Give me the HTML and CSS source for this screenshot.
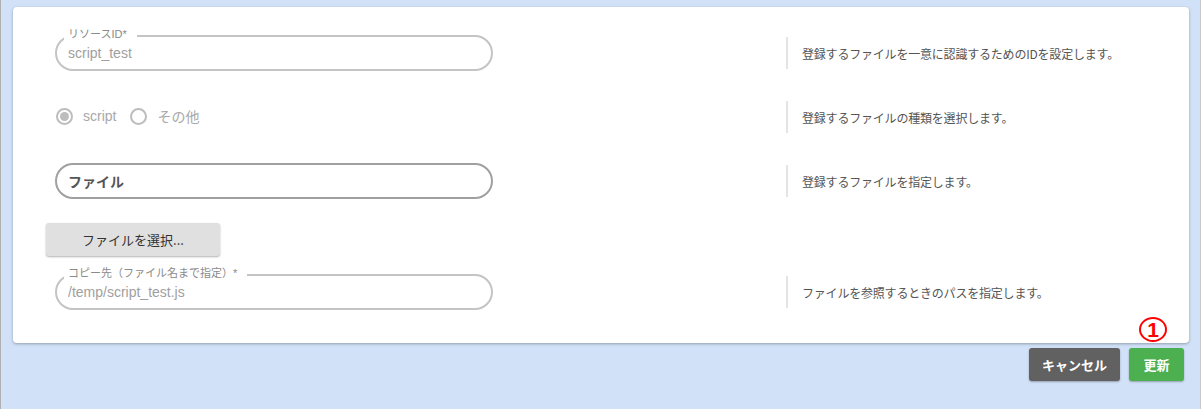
FILE: index.html
```html
<!DOCTYPE html>
<html lang="ja">
<head>
  <meta charset="UTF-8">
  <meta name="viewport" content="width=device-width, initial-scale=1.0">
  <title>リソース編集</title>
  <link rel="stylesheet" href="styles.css">
</head>
<body>

<div class="page">
  <div class="card">

    <!-- リソースID -->
    <div class="row">
      <div class="field">
        <span class="field-label">リソースID*</span>
        <input class="field-input" type="text" value="script_test" readonly>
      </div>
      <div class="desc">登録するファイルを一意に認識するためのIDを設定します。</div>
    </div>

    <!-- 種類 -->
    <div class="row row-radio">
      <div class="radio-group">
        <span class="radio checked"></span>
        <span class="radio-text">script</span>
        <span class="radio"></span>
        <span class="radio-text">その他</span>
      </div>
      <div class="desc">登録するファイルの種類を選択します。</div>
    </div>

    <!-- ファイル -->
    <div class="row row-file">
      <div class="field field-dark">
        <span class="file-name">ファイル</span>
      </div>
      <div class="desc">登録するファイルを指定します。</div>
    </div>

    <div class="row row-button">
      <button class="select-button">ファイルを選択...</button>
    </div>

    <!-- コピー先 -->
    <div class="row row-copy">
      <div class="field">
        <span class="field-label">コピー先（ファイル名まで指定）*</span>
        <input class="field-input" type="text" value="/temp/script_test.js" readonly>
      </div>
      <div class="desc">ファイルを参照するときのパスを指定します。</div>
    </div>

  </div>

  <div class="actions">
    <button class="btn btn-cancel">キャンセル</button>
    <button class="btn btn-update">更新</button>
    <span class="marker">1</span>
  </div>
</div>

</body>
</html>
```

FILE: styles.css
```css
html, body {
  margin: 0;
  padding: 0;
  background-color: #fff;
}
body {
  font-family: "Liberation Sans", "Noto Sans CJK JP", sans-serif;
}
.page {
  width: 1201px;
  height: 409px;
  box-sizing: border-box;
  background-color: #d1e1f7;
  border-left: 1px solid #b0b0b0;
  border-right: 1px solid #c8c8c8;
  padding: 7px 13px 0 12px;
}
/* カード */
.card {
  width: 1176px;
  box-sizing: border-box;
  background-color: #fff;
  border-radius: 4px;
  box-shadow: 0 1px 3px rgba(0, 0, 0, 0.3);
  padding: 28px 0 33px 33px;
}
.row {
  display: grid;
  grid-template-columns: 740px 1fr;
  align-items: center;
}
.row-radio { margin-top: 30px; height: 32px; }
.row-file { margin-top: 30px; }
.row-button { margin-top: 24px; }
.row-copy { margin-top: 18px; }

/* 入力欄（アウトライン） */
.field {
  position: relative;
  margin-left: 9px;
  width: 438px;
  height: 36px;
  box-sizing: border-box;
  border: 2px solid #c4c4c4;
  border-radius: 18px;
  display: flex;
  align-items: center;
  padding-left: 11px;
}
.field-dark {
  border-color: #a0a0a0;
}
.field-label {
  position: absolute;
  top: -9px;
  left: 7px;
  font-size: 11px;
  line-height: 13px;
  color: #8a8a8a;
  background-color: #fff;
  padding: 0 10px 0 4px;
}
.field-input {
  flex: 1;
  border: none;
  outline: none;
  padding: 0;
  background: transparent;
  font-family: "Liberation Sans", "Noto Sans CJK JP", sans-serif;
  font-size: 14px;
  color: #a0a0a0;
}
.file-name {
  font-family: "Noto Sans CJK JP", sans-serif;
  font-size: 14px;
  font-weight: bold;
  color: #555;
}

/* ラジオボタン */
.radio-group {
  display: flex;
  align-items: center;
  margin: 0 0 2px 10px;
}
.radio {
  width: 17px;
  height: 17px;
  box-sizing: border-box;
  border: 2px solid #bdbdbd;
  border-radius: 50%;
  display: flex;
  align-items: center;
  justify-content: center;
}
.radio.checked::after {
  content: "";
  width: 9px;
  height: 9px;
  border-radius: 50%;
  background-color: #bdbdbd;
}
.radio-text {
  font-size: 14px;
  color: #a8a8a8;
  margin: 0 14px 0 10px;
}

/* 説明 */
.desc {
  height: 32px;
  box-sizing: border-box;
  border-left: 2px solid #e4e4e4;
  padding-left: 14px;
  display: flex;
  align-items: center;
  font-family: "Noto Sans CJK JP", sans-serif;
  font-size: 12px;
  letter-spacing: -0.2px;
  color: #555;
}

/* ファイル選択ボタン */
.select-button {
  width: 174px;
  height: 33px;
  border: none;
  border-radius: 3px;
  background-color: #e0e0e0;
  box-shadow: 0 1px 2px rgba(0, 0, 0, 0.3);
  font-family: "Noto Sans CJK JP", sans-serif;
  font-size: 13px;
  color: #333;
  cursor: pointer;
}

/* 下部ボタン */
.actions {
  position: relative;
  width: 1171px;
  margin-top: 5px;
  display: flex;
  justify-content: flex-end;
  gap: 9px;
}
.btn {
  height: 33px;
  border: none;
  border-radius: 3px;
  box-shadow: 0 1px 2px rgba(0, 0, 0, 0.3);
  font-family: "Noto Sans CJK JP", sans-serif;
  font-size: 13px;
  font-weight: bold;
  color: #fff;
  cursor: pointer;
}
.btn-cancel {
  width: 91px;
  background-color: #616161;
}
.btn-update {
  width: 55px;
  background-color: #4caf50;
}
/* 注釈の番号 */
.marker {
  position: absolute;
  right: 17px;
  top: -31px;
  width: 24px;
  height: 21px;
  border: 2.5px solid #f00;
  border-radius: 50%;
  color: #f00;
  font-size: 21px;
  font-weight: bold;
  line-height: 21px;
  text-align: center;
}
```
